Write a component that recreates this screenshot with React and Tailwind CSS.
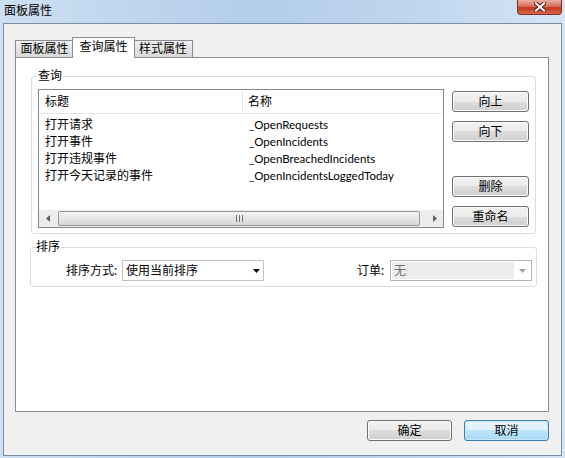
import React from 'react';

function Btn({ children, className = '', primary = false }) {
  return (
    <div
      className={`flex items-center justify-center h-[21px] rounded-[3px] border leading-[14px] ${
        primary
          ? 'border-[#3c7fb1] bg-[linear-gradient(#eaf6fd_0%,#d9f0fc_50%,#bee6fd_50%,#a7d9f5_100%)] shadow-[inset_0_0_0_1px_#c7e9fa]'
          : 'border-[#707070] bg-[linear-gradient(#f2f2f2_0%,#ebebeb_50%,#dddddd_50%,#cfcfcf_100%)] shadow-[inset_0_0_0_1px_#fbfbfb]'
      } ${className}`}
    >
      {children}
    </div>
  );
}

function Arrow({ color = '#000' }) {
  return (
    <svg width="7" height="4" viewBox="0 0 7 4">
      <path d="M0 0h7L3.5 4z" fill={color} />
    </svg>
  );
}

const rows = [
  ['打开请求', '_OpenRequests'],
  ['打开事件', '_OpenIncidents'],
  ['打开违规事件', '_OpenBreachedIncidents'],
  ['打开今天记录的事件', '_OpenIncidentsLoggedToday'],
];

export default function App() {
  return (
    <div className="w-[565px] h-[458px] overflow-hidden bg-[linear-gradient(to_right,#cddff2,#b3cdeb_45%,#c0d6ee_75%,#d6e5f5)] font-['Noto_Sans','Noto_Sans_CJK_SC',sans-serif] text-[12px] text-black">
      {/* title bar */}
      <div className="h-[23px] flex items-start justify-between">
        <span className="pl-[4px] pt-[4px] leading-[14px]">面板属性</span>
        <div className="mr-[3px] w-[45px] h-[15px] rounded-b-[4px] border border-t-0 border-[#7e3125] bg-[linear-gradient(#eab0a2_0%,#d9705c_45%,#c2381f_55%,#d8674a_100%)] flex items-center justify-center">
          <svg width="12" height="10" viewBox="0 0 12 10">
            <path d="M2 1.5l8 7M10 1.5l-8 7" stroke="#5a2018" strokeWidth="4" strokeLinecap="square" />
            <path d="M2 1.5l8 7M10 1.5l-8 7" stroke="#fff" strokeWidth="2" strokeLinecap="square" />
          </svg>
        </div>
      </div>

      {/* client area */}
      <div className="ml-[3px] w-[559px] h-[433px] border border-[#7b8da3] bg-[#f0f0f0] pl-[11px] pt-[13px]">
        {/* tabs */}
        <div className="h-[21px] flex items-end">
          <div className="w-[59px] h-[17px] mb-px border border-b-0 border-[#898c95] bg-[linear-gradient(#f2f2f2,#e3e3e3_50%,#d9d9d9)] flex items-center justify-center leading-[14px]">
            面板属性
          </div>
          <div className="relative z-10 -ml-[2px] w-[63px] h-[21px] border border-b-0 border-[#898c95] bg-white flex items-center justify-center leading-[14px] pb-[2px]">
            查询属性
          </div>
          <div className="-ml-[2px] w-[60px] h-[17px] mb-px border border-b-0 border-[#898c95] bg-[linear-gradient(#f2f2f2,#e3e3e3_50%,#d9d9d9)] flex items-center justify-center leading-[14px]">
            样式属性
          </div>
        </div>

        {/* tab panel */}
        <div className="-mt-px w-[534px] h-[355px] border border-[#898c95] bg-white">
          <fieldset className="ml-[15px] mt-[11px] w-[505px] border border-[#d5dfe5] rounded-[3px]">
            <legend className="ml-[5px] px-[1px] leading-[14px]">查询</legend>
            <div className="flex pl-[6px] pt-[6px] pb-[5px]">
              {/* list */}
              <div className="w-[406px] h-[139px] border border-[#828790] bg-white flex flex-col">
                <div className="h-[24px] flex items-center border-b border-[#e5e5e5]">
                  <div className="w-[203px] pl-[6px] leading-[14px]">标题</div>
                  <div className="w-px h-[21px] bg-[#e3e8ee]" />
                  <div className="pl-[5px] leading-[14px]">名称</div>
                </div>
                <div className="pt-[2px] flex flex-col">
                  {rows.map(([a, b]) => (
                    <div key={b} className="h-[17px] flex items-center leading-[14px]">
                      <div className="w-[204px] pl-[6px]">{a}</div>
                      <div className="pl-[6px] font-['Lato',sans-serif] text-[11.5px]">{b}</div>
                    </div>
                  ))}
                </div>
                <div className="flex-1" />
                {/* horizontal scrollbar */}
                <div className="h-[17px] flex items-center bg-[#ececec]">
                  <div className="w-[17px] h-full flex items-center justify-center">
                    <svg width="4" height="7" viewBox="0 0 4 7">
                      <path d="M4 0v7L0 3.5z" fill="#606060" />
                    </svg>
                  </div>
                  <div className="ml-[2px] w-[362px] h-[15px] rounded-[2px] border border-[#979797] bg-[linear-gradient(#f4f4f4,#e6e6e6_50%,#d6d6d6)] flex items-center justify-center gap-[2px]">
                    <div className="w-px h-[7px] bg-[#6e6e6e]" />
                    <div className="w-px h-[7px] bg-[#6e6e6e]" />
                    <div className="w-px h-[7px] bg-[#6e6e6e]" />
                  </div>
                  <div className="flex-1" />
                  <div className="w-[17px] h-full flex items-center justify-center">
                    <svg width="4" height="7" viewBox="0 0 4 7">
                      <path d="M0 0v7L4 3.5z" fill="#606060" />
                    </svg>
                  </div>
                </div>
              </div>

              {/* buttons */}
              <div className="ml-[8px] w-[77px] flex flex-col">
                <Btn className="mt-[2px]">向上</Btn>
                <Btn className="mt-[9px]">向下</Btn>
                <Btn className="mt-[34px]">删除</Btn>
                <Btn className="mt-[9px]">重命名</Btn>
              </div>
            </div>
          </fieldset>

          <fieldset className="ml-[14px] mt-[6px] w-[507px] border border-[#d5dfe5] rounded-[3px]">
            <legend className="ml-[4px] px-[1px] leading-[14px]">排序</legend>
            <div className="flex items-center pt-[6px] pb-[5px]">
              <div className="ml-[35px] w-[56px] leading-[14px]">排序方式:</div>
              <div className="w-[142px] h-[21px] border border-[#c2c2c2] bg-white flex items-center pl-[3px] pr-[3px]">
                <span className="flex-1 leading-[14px]">使用当前排序</span>
                <Arrow />
              </div>
              <div className="ml-auto w-[33px] leading-[14px]">订单:</div>
              <div className="mr-[4px] w-[142px] h-[21px] border border-[#b5b5b5] bg-white flex items-center p-[1px]">
                <div className="w-[122px] h-full bg-[#ececec] pl-[2px] text-[#6d6d6d] leading-[17px]">无</div>
                <div className="flex-1 flex items-center justify-center">
                  <Arrow color="#a0a0a0" />
                </div>
              </div>
            </div>
          </fieldset>
        </div>

        {/* dialog buttons */}
        <div className="mt-[8px] w-[534px] flex justify-end gap-[12px]">
          <Btn className="w-[85px]">确定</Btn>
          <Btn className="w-[85px]" primary>取消</Btn>
        </div>
      </div>
    </div>
  );
}
